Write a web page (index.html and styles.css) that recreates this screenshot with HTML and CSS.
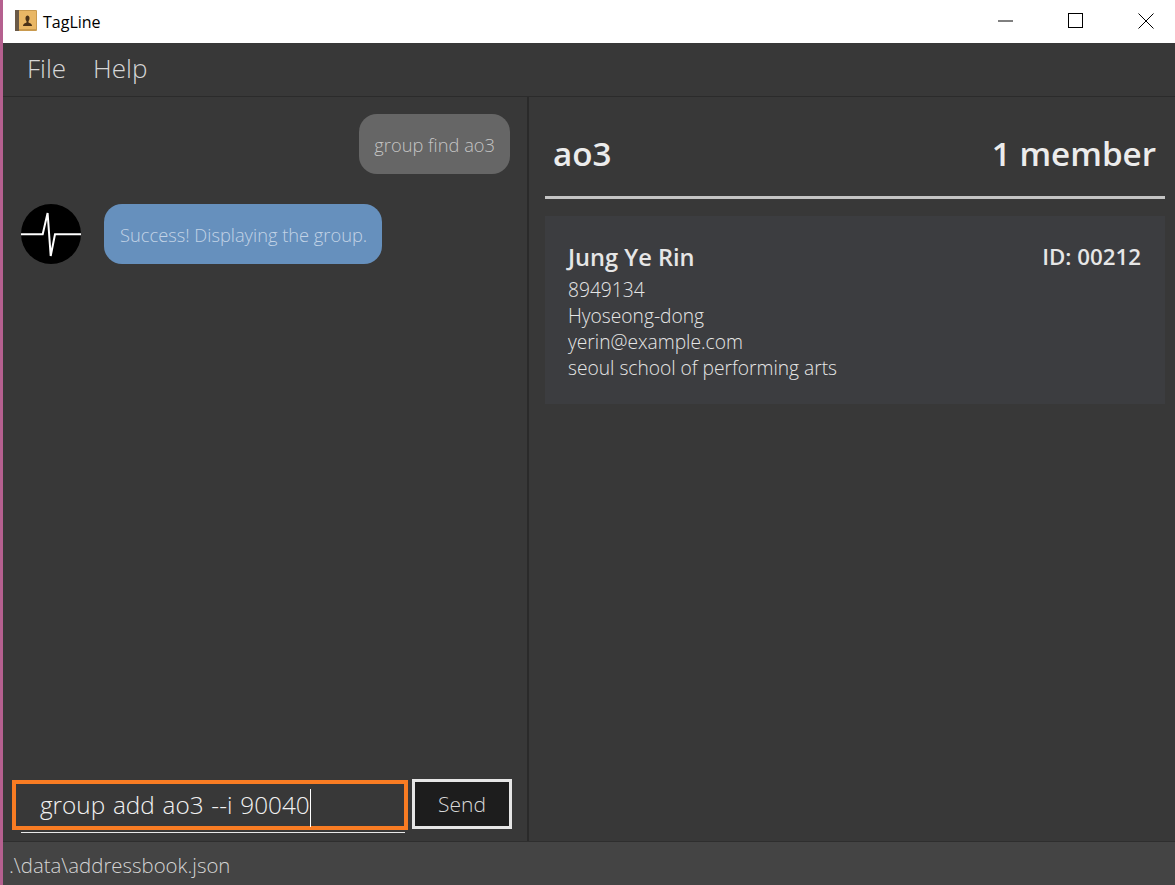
FILE: index.html
```html
<!DOCTYPE html>
<html lang="en">
<head>
    <meta charset="UTF-8">
    <title>TagLine</title>
    <link rel="stylesheet" href="styles.css">
</head>
<body>
    <div class="window">
        <div class="title-bar">
            <svg class="app-icon" width="22" height="21" viewBox="0 0 22 21">
                <rect x="0" y="0" width="22" height="21" rx="1" fill="#c99a4e"/>
                <rect x="0" y="0" width="4" height="21" fill="#6b5a48"/>
                <rect x="4" y="1" width="17" height="18" fill="#e9b765"/>
                <path d="M8 16c0-2.500 2.500-3 3.500-3.500V11c-.8-.7-1-1.700-1-3 0-1.500 1-2.500 2-2.500s2 1 2 2.500c0 1.300-.2 2.300-1 3v1.500c1 .5 3.500 1 3.500 3.500z" fill="#4a3218"/>
            </svg>
            <span class="app-name">TagLine</span>
            <div class="window-controls">
                <svg width="16" height="2" viewBox="0 0 16 2"><path d="M0 1h15" stroke="#000" stroke-width="1"/></svg>
                <svg width="16" height="16" viewBox="0 0 16 16"><rect x="0.5" y="0.5" width="14" height="14" fill="none" stroke="#000"/></svg>
                <svg width="16" height="16" viewBox="0 0 16 16"><path d="M0.500 0.500l15 15M15.500 0.500l-15 15" stroke="#000" fill="none"/></svg>
            </div>
        </div>

        <div class="menu-bar">
            <span class="menu-item">File</span>
            <span class="menu-item">Help</span>
        </div>

        <div class="main">
            <div class="left-panel">
                <div class="chat">
                    <div class="msg-user">
                        <div class="bubble bubble-user">group find ao3</div>
                    </div>
                    <div class="msg-bot">
                        <svg class="avatar" width="60" height="60" viewBox="0 0 60 60">
                            <circle cx="30" cy="30" r="30" fill="#000"/>
                            <path d="M0 30.300h21.700L26.600 9l3.100 43L34 30.300h26" fill="none" stroke="#fff" stroke-width="2"/>
                        </svg>
                        <div class="bubble bubble-bot">Success! Displaying the group.</div>
                    </div>
                </div>
                <div class="command-row">
                    <div class="command-box">
                        <div class="command-input">group add ao3 --i 90040<span class="caret"></span></div>
                    </div>
                    <div class="send-btn">Send</div>
                </div>
            </div>

            <div class="right-panel">
                <div class="group-header">
                    <span>ao3</span>
                    <span>1 member</span>
                </div>
                <div class="card">
                    <div class="card-top">
                        <span class="card-name">Jung Ye Rin</span>
                        <span class="card-id">ID: 00212</span>
                    </div>
                    <div class="card-line">8949134</div>
                    <div class="card-line">Hyoseong-dong</div>
                    <div class="card-line">yerin@example.com</div>
                    <div class="card-line">seoul school of performing arts</div>
                </div>
            </div>
        </div>

        <div class="status-bar">.\data\addressbook.json</div>
    </div>
</body>
</html>
```

FILE: styles.css
```css
html, body {
    margin: 0;
    height: 100%;
    overflow: hidden;
}
body {
    font-family: "Open Sans", "Noto Sans", sans-serif;
    background-color: #383838;
}
.window {
    display: flex;
    flex-direction: column;
    height: 885px;
    border-left: 3px solid #b5608f;
    box-sizing: border-box;
}
.title-bar {
    display: flex;
    align-items: center;
    height: 43px;
    flex: none;
    background: #fff;
    padding-left: 12px;
}
.app-icon {
    margin-right: 6px;
    margin-top: -2px;
}
.app-name {
    font-size: 16px;
    color: #000;
}
.window-controls {
    margin-left: auto;
    display: flex;
    align-items: center;
    gap: 54px;
    padding-right: 21px;
    margin-top: -2px;
}
.menu-bar {
    display: flex;
    flex: none;
    gap: 27px;
    align-items: center;
    padding: 0 0 3px 24px;
    box-sizing: border-box;
    height: 54px;
    background: #383838;
    border-bottom: 1px solid #2b2b2b;
}
.menu-item {
    font-size: 26px;
    font-weight: 300;
    color: #d6d6d6;
}
.main {
    display: flex;
    flex: 1;
    min-height: 0;
}
.left-panel {
    display: flex;
    flex-direction: column;
    width: 526px;
    flex: none;
    box-sizing: border-box;
    border-right: 2px solid #2a2a2a;
}
.chat {
    flex: 1;
    padding: 17px 17px 0 18px;
    display: flex;
    flex-direction: column;
    gap: 30px;
}
.msg-user {
    display: flex;
    justify-content: flex-end;
}
.msg-bot {
    display: flex;
    gap: 23px;
}
.bubble {
    height: 60px;
    line-height: 61px;
    padding: 0 15px;
    border-radius: 18px;
    font-size: 18.300px;
    font-weight: 300;
    box-sizing: border-box;
}
.bubble-user {
    background-color: #666;
    color: #c4c4c4;
}
.bubble-bot {
    background-color: #6690bd;
    color: #c2d3e6;
    padding-left: 16px;
}
.avatar {
    flex: none;
}
.command-row {
    display: flex;
    padding: 0 12px 0 9px;
    gap: 4px;
    height: 62px;
    box-sizing: border-box;
}
.command-box {
    position: relative;
    width: 396px;
    height: 50px;
    margin-top: 1px;
}
.command-box::after {
    content: "";
    position: absolute;
    left: 9px;
    right: 3px;
    top: 52px;
    height: 1px;
    background: #e8e8e8;
}
.command-input {
    height: 50px;
    box-sizing: border-box;
    border: 4px solid #f97c23;
    padding-left: 24px;
    line-height: 42px;
    font-size: 24.300px;
    font-weight: 300;
    word-spacing: 1.500px;
    color: #f2f2f2;
    white-space: nowrap;
}
.caret {
    display: inline-block;
    width: 1px;
    height: 38px;
    background: #fff;
    vertical-align: middle;
}
.send-btn {
    width: 100px;
    height: 50px;
    box-sizing: border-box;
    border: 3px solid #e6e6e6;
    background: #1d1d1d;
    color: #d9d9d9;
    font-size: 21px;
    font-weight: 300;
    line-height: 45px;
    text-align: center;
}
.right-panel {
    flex: 1;
    padding: 0 10px 0 16px;
}
.group-header {
    display: flex;
    justify-content: space-between;
    height: 102px;
    box-sizing: border-box;
    padding: 33px 9px 0 8px;
    border-bottom: 3px solid #c4c4c4;
    font-size: 33.200px;
    font-weight: 600;
    line-height: 48px;
    color: #ececec;
}
.card {
    margin-top: 17px;
    height: 188px;
    box-sizing: border-box;
    padding: 24px 24px 0 23px;
    background: #3c3d40;
    color: #e6e6e6;
}
.card-top {
    display: flex;
    justify-content: space-between;
    font-weight: 600;
    line-height: 34px;
    margin-bottom: 3px;
}
.card-name {
    font-size: 23.600px;
}
.card-id {
    font-size: 22.300px;
}
.card-line {
    font-size: 19.200px;
    font-weight: 300;
    line-height: 26px;
}
.status-bar {
    flex: none;
    height: 44px;
    box-sizing: border-box;
    border-top: 1px solid #2e2e2e;
    background: #444;
    padding-left: 6px;
    font-size: 20.400px;
    font-weight: 300;
    line-height: 46px;
    color: #d4d4d4;
}
```
